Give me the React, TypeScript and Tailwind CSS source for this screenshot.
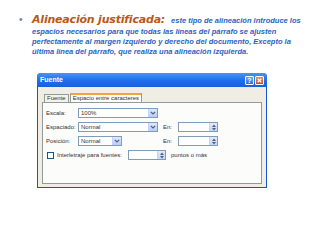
import React from "react";

const ui = { fontFamily: '"Liberation Sans", Arial, sans-serif' };

function Arrow() {
  return (
    <div className="w-[9px] self-stretch bg-gradient-to-b from-[#dfe9fd] to-[#b6cdf8] border-l border-[#c3d3fd] flex items-center justify-center">
      <svg width="6" height="4" viewBox="0 0 6 4">
        <path d="M0.8 0.8 L3 3 L5.2 0.8" fill="none" stroke="#4d6185" strokeWidth="1.2" />
      </svg>
    </div>
  );
}

function Spin() {
  return (
    <div className="w-[8px] self-stretch flex flex-col bg-gradient-to-b from-[#e3ebfd] to-[#c4d6fa] border-l border-[#c3d3fd]">
      <div className="flex-1 flex items-center justify-center">
        <svg width="4" height="3" viewBox="0 0 4 3">
          <path d="M0 3 L2 0.5 L4 3 Z" fill="#4d6185" />
        </svg>
      </div>
      <div className="flex-1 flex items-center justify-center">
        <svg width="4" height="3" viewBox="0 0 4 3">
          <path d="M0 0 L2 2.5 L4 0 Z" fill="#4d6185" />
        </svg>
      </div>
    </div>
  );
}

function Select({ w, value }: { w: string; value: string }) {
  return (
    <div className={`${w} h-[10px] border border-[#7f9db9] bg-white flex items-stretch`}>
      <div className="flex-1 pl-[2px] text-[6px] leading-[8px] text-[#333]">{value}</div>
      <Arrow />
    </div>
  );
}

function SpinBox({ w }: { w: string }) {
  return (
    <div className={`${w} h-[10px] border border-[#7f9db9] bg-white flex items-stretch`}>
      <div className="flex-1" />
      <Spin />
    </div>
  );
}

export default function App() {
  return (
    <div className="w-[320px] h-[240px] bg-white overflow-hidden">
      <div className="pt-[14px] pl-[19px]">
        <div className="flex items-baseline h-[13px] whitespace-nowrap">
          <span className="w-[13px] flex-none text-[10px] text-[#6b7fa8] leading-[12px]" style={ui}>•</span>
          <span
            className="flex-none text-[11px] font-bold italic text-[#bb5816] tracking-[-0.2px] leading-[12px]"
            style={{ fontFamily: '"DejaVu Sans", Verdana, sans-serif' }}
          >
            Alineación justificada:
          </span>
          <span className="flex-none ml-[6px] text-[7.5px] italic font-semibold text-[#2a62c4] leading-[10px]" style={ui}>
            este tipo de alineación introduce los
          </span>
        </div>
        <div className="pl-[13px] whitespace-nowrap text-[7.5px] italic font-semibold text-[#2a62c4] leading-[10px]" style={ui}>
          <div>espacios necesarios para que todas las líneas del párrafo se ajusten</div>
          <div>perfectamente al margen izquierdo y derecho del documento, Excepto la</div>
          <div>última línea del párrafo, que realiza una alineación izquierda.</div>
        </div>
      </div>

      <div className="ml-[37px] mt-[16px] w-[230px] h-[115px] flex flex-col rounded-t-[4px] overflow-hidden bg-[#1553d4]" style={ui}>
        <div className="h-[14px] flex items-center justify-between pl-[3px] pr-[3px] bg-gradient-to-b from-[#4a94f4] via-[#2070e8] to-[#1760dc]">
          <span className="text-[7px] font-bold text-white">Fuente</span>
          <div className="flex gap-[1px]">
            <div className="w-[9px] h-[9px] rounded-[1px] border border-white bg-gradient-to-b from-[#6aa6f7] to-[#2f70de] flex items-center justify-center text-white text-[7px] font-bold leading-none">?</div>
            <div className="w-[9px] h-[9px] rounded-[1px] border border-white bg-gradient-to-b from-[#f08a6a] to-[#d44a1c] flex items-center justify-center">
              <svg width="5" height="5" viewBox="0 0 5 5">
                <path d="M0.7 0.7 L4.3 4.3 M4.3 0.7 L0.7 4.3" stroke="white" strokeWidth="1.3" />
              </svg>
            </div>
          </div>
        </div>
        <div className="flex-1 mx-[1px] mb-[1px] bg-[#efede4] px-[4px] pt-[6px] pb-[3px] flex flex-col">
          <div className="flex items-end pl-[2px] h-[9px]">
            <div className="h-[8px] px-[2px] border border-b-0 border-[#919b9c] bg-[#f3f2ec] text-[6px] leading-[7px] text-[#333]">Fuente</div>
            <div className="h-[9px] ml-[1px] px-[2px] border border-b-0 border-[#919b9c] border-t-[#f0a53a] border-t-2 bg-[#fcfcfb] text-[6px] leading-[7px] text-[#333]">Espacio entre caracteres</div>
          </div>
          <div className="flex-1 border border-[#919b9c] bg-[#fcfcfb] pl-[3px] pt-[5px] flex flex-col gap-[4px] text-[6px] text-[#333]">
            <div className="flex items-center h-[10px]">
              <span className="w-[32px]">Escala:</span>
              <Select w="w-[80px]" value="100%" />
            </div>
            <div className="flex items-center h-[10px]">
              <span className="w-[32px]">Espaciado:</span>
              <Select w="w-[80px]" value="Normal" />
              <span className="ml-[5px] w-[15px]">En:</span>
              <SpinBox w="w-[40px]" />
            </div>
            <div className="flex items-center h-[10px]">
              <span className="w-[32px]">Posición:</span>
              <Select w="w-[44px]" value="Normal" />
              <span className="ml-[41px] w-[15px]">En:</span>
              <SpinBox w="w-[40px]" />
            </div>
            <div className="flex items-center h-[10px]">
              <div className="w-[7px] h-[7px] border border-[#1c5180] bg-white ml-[1px] mr-[3px]" />
              <span className="w-[71px]">Interletraje para fuentes:</span>
              <SpinBox w="w-[38px]" />
              <span className="ml-[5px]">puntos o más</span>
            </div>
          </div>
        </div>
      </div>
    </div>
  );
}
